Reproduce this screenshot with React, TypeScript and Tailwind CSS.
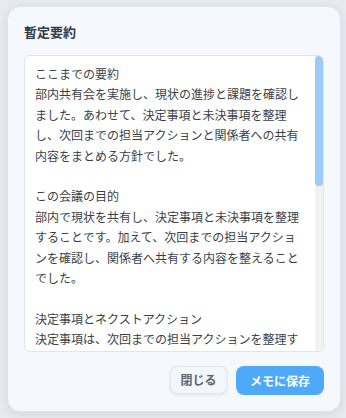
const SUMMARY = `ここまでの要約
部内共有会を実施し、現状の進捗と課題を確認しました。あわせて、決定事項と未決事項を整理し、次回までの担当アクションと関係者への共有内容をまとめる方針でした。

この会議の目的
部内で現状を共有し、決定事項と未決事項を整理することです。加えて、次回までの担当アクショ
ンを確認し、関係者へ共有する内容を整えることでした。

決定事項とネクストアクション
決定事項は、次回までの担当アクションを整理することです。各担当者は期限までに進捗を報告し、未決事項は次回の会議で再度確認します。

未決事項
関係者への共有方法と共有のタイミングについては、引き続き検討が必要です。`;

export default function App() {
  return (
    <div className="w-[346px] h-[418px] bg-[#e7eaee] pt-[6px] pl-[7px] pr-[5px] pb-[6px] font-['Noto_Sans_CJK_JP','Noto_Sans',sans-serif]">
      <div className="h-[406px] rounded-[13px] border border-[#dce6f3] bg-[#f5f8fd] shadow-[0_2px_8px_rgba(120,140,170,0.18)] px-[16px] pt-[17px] pb-[16px] flex flex-col">
        <h2 className="text-[13px] leading-[16px] font-bold text-[#333a44]">暫定要約</h2>
        <div className="mt-[15px] h-[298px] rounded-[6px] border border-[#dfe6ef] bg-white flex overflow-hidden">
          <div className="flex-1 min-w-0 overflow-hidden pl-[10px] pr-[12px] pt-[8px] whitespace-pre-wrap text-[12px] leading-[20.4px] text-[#3a3f47]">
            {SUMMARY}
          </div>
          {/* scrollbar */}
          <div className="w-[8px] bg-[#f1f2f4] flex flex-col">
            <div className="h-[130px] rounded-full bg-[#9dcbf7]" />
          </div>
        </div>
        <div className="mt-[14px] flex justify-end gap-[9px]">
          <button className="h-[28px] w-[57px] rounded-[7px] border border-[#e1e7ef] bg-[#f3f6fb] text-[12px] font-bold text-[#5b6570] shadow-[0_1px_3px_rgba(120,140,170,0.18)]">
            閉じる
          </button>
          <button className="h-[29px] w-[88px] rounded-[8px] bg-[#4eaaf8] text-[12px] font-bold text-white">
            メモに保存
          </button>
        </div>
      </div>
    </div>
  );
}
